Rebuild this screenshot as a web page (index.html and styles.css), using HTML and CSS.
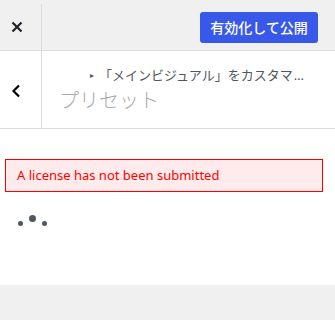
FILE: index.html
```html
<!DOCTYPE html>
<html lang="ja">
<head>
    <meta charset="UTF-8">
    <meta name="viewport" content="width=device-width, initial-scale=1.0">
    <title>カスタマイズ</title>
    <link rel="stylesheet" href="styles.css">
</head>
<body>
    <div class="header-bar">
        <a class="close-btn" href="#" aria-label="閉じる">
            <svg width="12" height="12" viewBox="0 0 12 12"><path d="M1.5 1.5 L10.5 10.5 M10.5 1.5 L1.5 10.5" stroke="#1d2327" stroke-width="2.2" fill="none"/></svg>
        </a>
        <button class="publish-btn">有効化して公開</button>
    </div>

    <div class="panel">
        <div class="section-head">
            <a class="back-btn" href="#" aria-label="戻る">
                <svg width="10" height="14" viewBox="0 0 10 14"><path d="M8 1.5 L2.5 7 L8 12.5" stroke="#000" stroke-width="2.2" fill="none"/></svg>
            </a>
            <div class="section-title">
                <div class="crumb"><span class="crumb-arrow">▸</span>「メインビジュアル」をカスタマ<span class="ellipsis">…</span></div>
                <h2>プリセット</h2>
            </div>
        </div>

        <div class="content">
            <div class="error">A license has not been submitted</div>
            <div class="loader">
                <span class="dot small"></span>
                <span class="dot big"></span>
                <span class="dot small"></span>
            </div>
        </div>
    </div>

    <div class="footer"></div>
</body>
</html>
```

FILE: styles.css
```css
body {
    margin: 0;
    font-family: "Noto Sans", "Noto Sans CJK JP", sans-serif;
    background-color: #f0f0f1;
    width: 335px;
    height: 320px;
    overflow: hidden;
}
.header-bar {
    display: flex;
    align-items: flex-end;
    justify-content: space-between;
    height: 50px;
    border-bottom: 1px solid #dcdcde;
    background-color: #f0f0f1;
}
.close-btn {
    display: flex;
    align-items: center;
    width: 42px;
    height: 46px;
    border-right: 1px solid #dcdcde;
    box-sizing: border-box;
    padding-left: 11px;
}
.publish-btn {
    background-color: #3858e9;
    color: white;
    border: none;
    border-radius: 3px;
    font-family: "Noto Sans CJK JP", sans-serif;
    font-size: 14px;
    font-weight: 500;
    height: 31px;
    width: 118px;
    padding: 0;
    margin: 0 17px 7px 0;
    line-height: 31px;
}
.panel {
    background-color: white;
    height: 234px;
}
.section-head {
    display: flex;
    height: 77px;
    border-bottom: 1px solid #dcdcde;
}
.back-btn {
    display: flex;
    align-items: center;
    width: 42px;
    border-right: 1px solid #dcdcde;
    padding-left: 11px;
    padding-top: 2px;
    box-sizing: border-box;
}
.section-title {
    padding-left: 17px;
    min-width: 0;
    flex: 1;
}
.crumb {
    font-family: "Noto Sans CJK JP", sans-serif;
    font-size: 13px;
    color: #50575e;
    margin: 16px 0 0 31px;
    line-height: 16px;
    white-space: nowrap;
}
.crumb-arrow {
    font-size: 8px;
    margin-right: 5px;
    vertical-align: 2px;
}
.ellipsis {
    font-family: "Noto Sans", sans-serif;
    margin-left: 1px;
}
h2 {
    font-family: "Noto Sans CJK JP", sans-serif;
    font-size: 20px;
    font-weight: 300;
    color: #a7aaad;
    margin: 5px 0 0;
    line-height: 24px;
}
.content {
    padding: 30px 12px 0 5px;
}
.error {
    background-color: #ffebeb;
    border: 1px solid #ff0000;
    color: #ff0000;
    font-size: 13px;
    height: 31px;
    line-height: 31px;
    padding-left: 11px;
}
.loader {
    display: flex;
    align-items: flex-end;
    gap: 6px;
    margin: 24px 0 0 13px;
    height: 10px;
}
.dot {
    background-color: #50575e;
    border-radius: 50%;
}
.dot.small {
    width: 5px;
    height: 5px;
}
.dot.big {
    width: 7px;
    height: 7px;
    margin-bottom: 4px;
}
.footer {
    height: 35px;
    background-color: #f0f0f1;
}
```
